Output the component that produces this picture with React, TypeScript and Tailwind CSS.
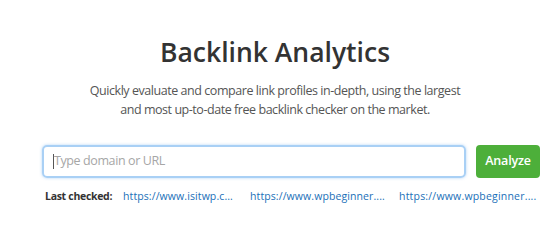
import React from "react";

export default function App() {
  return (
    <div
      className="w-[550px] h-[225px] bg-white overflow-hidden"
      style={{ fontFamily: '"Open Sans", "Noto Sans", sans-serif' }}
    >
      <div className="flex flex-col items-center pt-[35px]">
        <h1 className="text-[26.5px] leading-[34px] font-semibold text-[#333333]">
          Backlink Analytics
        </h1>
        <p className="mt-[13px] text-[12.5px] leading-[18.5px] tracking-[-0.45px] text-[#555555] text-center">
          Quickly evaluate and compare link profiles in-depth, using the largest
          <br />
          and most up-to-date free backlink checker on the market.
        </p>
      </div>
      <div className="flex items-center pl-[42px] mt-[26px] gap-[10px]">
        <div className="w-[424px] h-[33px] rounded-[5px] border-2 border-[#a9d0f5] shadow-[0_0_3px_rgba(100,170,240,0.5)] flex items-center pl-[9px]">
          <span className="w-px h-[15px] bg-[#555]" />
          <span className="text-[12.5px] tracking-[-0.4px] text-[#a6a6a6]">Type domain or URL</span>
        </div>
        <button className="w-[64px] h-[33px] rounded-[4px] bg-[#4daf3a] text-white text-[12.5px] tracking-[-0.2px] font-semibold">
          Analyze
        </button>
      </div>
      <div className="flex items-center pl-[45px] mt-[11px] text-[10.5px] whitespace-nowrap">
        <span className="w-[78px] font-bold text-[#333] tracking-[-0.3px]">Last checked:</span>
        <span className="w-[127px] text-[#1a6fb8] tracking-[0.1px]">https://www.isitwp.c...</span>
        <span className="w-[149px] text-[#1a6fb8] tracking-[0.1px]">https://www.wpbeginner....</span>
        <span className="text-[#1a6fb8] tracking-[0.2px]">https://www.wpbeginner....</span>
      </div>
    </div>
  );
}
